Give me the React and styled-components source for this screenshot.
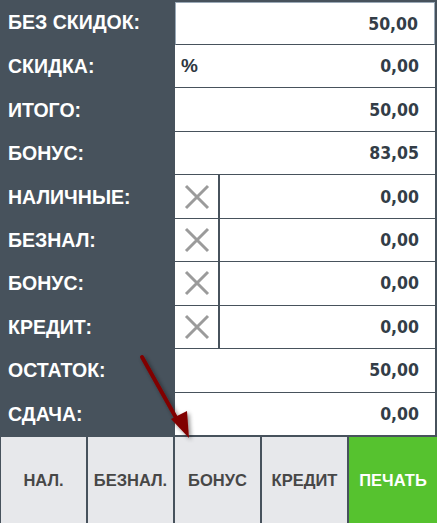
import styled, { createGlobalStyle } from "styled-components";

const GlobalStyle = createGlobalStyle`
  html, body {
    margin: 0;
    padding: 0;
    background: #ffffff;
  }
`;

const rows = [
  { label: "БЕЗ СКИДОК:", value: "50,00", focused: true },
  { label: "СКИДКА:", value: "0,00", prefix: "%" },
  { label: "ИТОГО:", value: "50,00" },
  { label: "БОНУС:", value: "83,05" },
  { label: "НАЛИЧНЫЕ:", value: "0,00", clear: true },
  { label: "БЕЗНАЛ:", value: "0,00", clear: true },
  { label: "БОНУС:", value: "0,00", clear: true },
  { label: "КРЕДИТ:", value: "0,00", clear: true },
  { label: "ОСТАТОК:", value: "50,00" },
  { label: "СДАЧА:", value: "0,00" },
];

const buttons = [
  { text: "НАЛ." },
  { text: "БЕЗНАЛ." },
  { text: "БОНУС" },
  { text: "КРЕДИТ" },
  { text: "ПЕЧАТЬ", primary: true },
];

function CrossIcon() {
  return (
    <svg width="26" height="26" viewBox="0 0 26 26">
      <path d="M2 2 L24 24 M24 2 L2 24" stroke="#9b9b9b" strokeWidth="3" />
    </svg>
  );
}

function App() {
  return (
    <>
      <GlobalStyle />
      <Wrapper>
        <Rows>
          {rows.map((row, i) => (
            <Row key={i}>
              <Label>{row.label}</Label>
              <Cell $focused={row.focused}>
                {row.clear && (
                  <ClearBox>
                    <CrossIcon />
                  </ClearBox>
                )}
                {row.prefix && <Prefix>{row.prefix}</Prefix>}
                <Value>{row.value}</Value>
              </Cell>
            </Row>
          ))}
        </Rows>
        <Buttons>
          {buttons.map((b) => (
            <Button key={b.text} $primary={b.primary}>
              {b.text}
            </Button>
          ))}
        </Buttons>
        <Arrow width="70" height="100" viewBox="0 0 70 100">
          <defs>
            <filter id="sh" x="-50%" y="-50%" width="200%" height="200%">
              <feDropShadow dx="2" dy="2" stdDeviation="2" floodColor="#000" floodOpacity="0.45" />
            </filter>
          </defs>
          <g filter="url(#sh)">
            <line x1="4" y1="4" x2="41" y2="70" stroke="#800000" strokeWidth="4" strokeLinecap="round" />
            <polygon points="33,66 49,58 51,85" fill="#800000" />
          </g>
        </Arrow>
      </Wrapper>
    </>
  );
}

const Wrapper = styled.div`
  position: relative;
  width: 437px;
  height: 523px;
  background: #47525c;
  display: grid;
  grid-template-rows: 436px 87px;
  overflow: hidden;
`;

const Rows = styled.div`
  display: grid;
  grid-template-rows: 45px repeat(9, 1fr);
  padding-right: 2px;
`;

const Row = styled.div`
  display: grid;
  grid-template-columns: 175px 1fr;
  min-height: 0;
`;

const Label = styled.div`
  display: flex;
  align-items: center;
  padding-left: 8px;
  color: #ffffff;
  font-family: "Liberation Sans", Arial, sans-serif;
  font-weight: bold;
  font-size: 19.5px;
`;

const Cell = styled.div`
  display: flex;
  align-items: stretch;
  background: #ffffff;
  border-bottom: 1px solid #47525c;
  ${(p) =>
    p.$focused &&
    `
    margin-top: 2px;
    border: 1px solid #9aa9b7;
    border-bottom: 1px solid #47525c;
  `}
`;

const ClearBox = styled.div`
  width: 43px;
  flex: none;
  display: flex;
  align-items: center;
  justify-content: center;
  border-right: 2px solid #47525c;
`;

const Prefix = styled.div`
  display: flex;
  align-items: center;
  padding-left: 6px;
  color: #2e3740;
  font-family: "Liberation Sans", Arial, sans-serif;
  font-weight: bold;
  font-size: 19px;
`;

const Value = styled.div`
  flex: 1;
  display: flex;
  align-items: center;
  justify-content: flex-end;
  padding-right: 16px;
  color: #333d47;
  font-family: "DejaVu Sans Condensed", "DejaVu Sans", Verdana, sans-serif;
  font-stretch: condensed;
  font-weight: bold;
  font-size: 17.5px;
`;

const Buttons = styled.div`
  display: grid;
  grid-template-columns: repeat(4, 85px) 1fr;
  gap: 2px;
  border-top: 1px solid #47525c;
  border-left: 1px solid #47525c;
`;

const Button = styled.div`
  display: flex;
  align-items: center;
  justify-content: center;
  background: ${(p) => (p.$primary ? "#56c22f" : "#e7e8eb")};
  color: ${(p) => (p.$primary ? "#ffffff" : "#474747")};
  font-family: "Liberation Sans", Arial, sans-serif;
  font-weight: bold;
  font-size: 16.5px;
`;

const Arrow = styled.svg`
  position: absolute;
  left: 138px;
  top: 353px;
  pointer-events: none;
`;

export default App;
